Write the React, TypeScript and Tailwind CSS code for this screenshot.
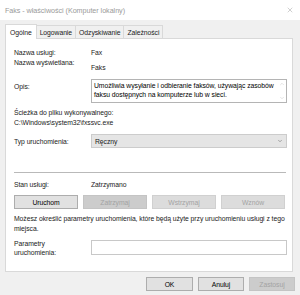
import { X, ChevronDown, ChevronUp } from 'lucide-react';

const Btn = ({ label, disabled, dark }: { label: string; disabled?: boolean; dark?: boolean }) => (
  <div
    className={`h-[14px] flex items-center justify-center border ${
      disabled
        ? dark
          ? 'bg-[#cccccc] border-[#c4c4c4] text-[#a3a3a3]'
          : 'bg-[#dcdcdc] border-[#d0d0d0] text-[#a3a3a3]'
        : 'bg-[#e1e1e1] border-[#adadad] text-black'
    }`}
  >
    {label}
  </div>
);

export default function App() {
  const tabs = ['Logowanie', 'Odzyskiwanie', 'Zależności'];
  return (
    <div className="w-[300px] h-[295px] bg-[#f0f0f0] flex flex-col font-['Liberation_Sans',Arial,sans-serif] text-[6.8px] leading-[9px] tracking-[-0.05px] text-[#222222] overflow-hidden">
      {/* title bar */}
      <div className="h-[20px] bg-white flex items-center justify-between pl-[5px] pr-[6px] shrink-0">
        <span className="text-[#9a9a9a] text-[7.2px]">Faks - właściwości (Komputer lokalny)</span>
        <X className="w-[8px] h-[8px] text-[#a0a0a0]" strokeWidth={1.5} />
      </div>

      <div className="pl-[5px] pr-[7px] pt-[3px]">
        {/* tabs */}
        <div className="flex items-end h-[15px]">
          <div className="h-[15px] px-[4px] bg-white border border-b-0 border-[#d9d9d9] flex items-center relative z-10 -mb-px">
            Ogólne
          </div>
          {tabs.map((t) => (
            <div key={t} className="h-[13px] px-[3px] border-t border-r border-[#d9d9d9] flex items-center bg-[#f0f0f0]">
              {t}
            </div>
          ))}
        </div>

        {/* panel */}
        <div className="bg-white border border-[#d9d9d9] h-[234px] pl-[8px] pr-[5px] pt-[9px]">
          <div className="grid grid-cols-[77px_1fr]">
            <span>Nazwa usługi:</span>
            <span>Fax</span>
          </div>
          <div className="grid grid-cols-[77px_1fr] mt-[1px]">
            <span>Nazwa wyświetlana:</span>
            <span className="mt-[5px]">Faks</span>
          </div>
          <div className="grid grid-cols-[77px_1fr] mt-[7px]">
            <span className="pt-[3px]">Opis:</span>
            <div className="h-[24px] border border-[#b4b4b4] flex">
              <div className="flex-1 pl-[2px] pt-[1px] leading-[9px] text-black">
                Umożliwia wysyłanie i odbieranie faksów, używając zasobów faksu dostępnych na komputerze lub w sieci.
              </div>
              <div className="w-[8px] flex flex-col items-center justify-between py-[1px] text-[#c8c8c8]">
                <ChevronUp className="w-[6px] h-[6px]" strokeWidth={2} />
                <ChevronDown className="w-[6px] h-[6px]" strokeWidth={2} />
              </div>
            </div>
          </div>

          <div className="mt-[5px] leading-[10px]">
            <div>Ścieżka do pliku wykonywalnego:</div>
            <div>C:\Windows\system32\fxssvc.exe</div>
          </div>

          <div className="grid grid-cols-[77px_1fr] items-center mt-[6px]">
            <span>Typ uruchomienia:</span>
            <div className="h-[14px] bg-[#e5e5e5] border border-[#cccccc] flex items-center justify-between pl-[3px] pr-[3px]">
              <span>Ręczny</span>
              <ChevronDown className="w-[6px] h-[6px] text-[#606060]" strokeWidth={2} />
            </div>
          </div>

          <div className="mt-[24px] h-px bg-[#b9b9b9] mr-[1px]" />

          <div className="grid grid-cols-[77px_1fr] mt-[7px]">
            <span>Stan usługi:</span>
            <span>Zatrzymano</span>
          </div>

          <div className="grid grid-cols-4 gap-[5px] mt-[6px] w-[271px]">
            <Btn label="Uruchom" />
            <Btn label="Zatrzymaj" disabled dark />
            <Btn label="Wstrzymaj" disabled />
            <Btn label="Wznów" disabled />
          </div>

          <div className="mt-[5px] leading-[10px]">
            Możesz określić parametry uruchomienia, które będą użyte przy uruchomieniu usługi z tego miejsca.
          </div>

          <div className="grid grid-cols-[77px_1fr] mt-[6px]">
            <div className="-mt-[1px]">
              <div>Parametry</div>
              <div>uruchomienia:</div>
            </div>
            <div className="h-[15px] border border-[#c8c8c8]" />
          </div>
        </div>
      </div>

      {/* bottom buttons */}
      <div className="flex justify-end gap-[5px] pr-[5px] mt-[5px]">
        <div className="w-[47px]"><Btn label="OK" /></div>
        <div className="w-[46px]"><Btn label="Anuluj" /></div>
        <div className="w-[46px]"><Btn label="Zastosuj" disabled dark /></div>
      </div>
    </div>
  );
}
